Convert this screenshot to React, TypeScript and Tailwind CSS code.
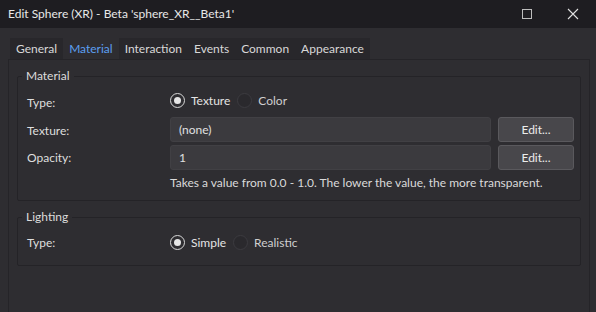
import React from "react";

function Radio({ checked, label }: { checked?: boolean; label: string }) {
  return (
    <label className="flex items-center gap-[6px]">
      <span
        className={
          "w-[15px] h-[15px] rounded-full border flex items-center justify-center " +
          (checked ? "border-[#d8d8d8]" : "border-[#3c3b40] bg-[#2a292d]")
        }
      >
        {checked && <span className="w-[7px] h-[7px] rounded-full bg-[#e6e6e6]" />}
      </span>
      <span className={checked ? "text-[#e4e4e4]" : "text-[#cfcfcf]"}>{label}</span>
    </label>
  );
}

function Group({ title, pt, pb, children }: { title: string; pt: string; pb: string; children: React.ReactNode }) {
  return (
    <div className={"relative border border-[#242327] rounded-[2px] pl-[9px] pr-[8px] " + pt + " " + pb}>
      <span className="absolute -top-[9px] left-[4px] px-[4px] bg-[#2e2d31] text-[#dcdcdc] leading-[16px]">{title}</span>
      {children}
    </div>
  );
}

const tabs = ["General", "Material", "Interaction", "Events", "Common", "Appearance"];

export default function App() {
  return (
    <div
      className="w-[596px] h-[312px] bg-[#2e2d31] text-[12px] text-[#dedede] flex flex-col overflow-hidden"
      style={{ fontFamily: '"Segoe UI", Lato, "Open Sans", sans-serif' }}
    >
      {/* title bar */}
      <div className="h-[28px] bg-[#1e1d21] flex items-center justify-between pl-[8px] shrink-0">
        <span className="text-[#e8e8e8] text-[12px]">Edit Sphere (XR) - Beta 'sphere_XR__Beta1'</span>
        <div className="flex items-center h-full">
          <div className="w-[46px] h-full flex items-center justify-center">
            <span className="w-[10px] h-[10px] border border-[#bdbdbd]" />
          </div>
          <div className="w-[46px] h-full flex items-center justify-center">
            <svg width="12" height="12" viewBox="0 0 12 12" stroke="#e0e0e0" strokeWidth="1.1">
              <path d="M1 1 L11 11 M11 1 L1 11" />
            </svg>
          </div>
        </div>
      </div>

      {/* tabs */}
      <div className="flex pl-[10px] pt-[10px] shrink-0">
        {tabs.map((t) => (
          <div
            key={t}
            className={
              "h-[21px] px-[6px] flex items-center " +
              (t === "Material" ? "bg-[#2e2d31] text-[#5c9ff0]" : "bg-[#28272b] text-[#d8d8d8]")
            }
          >
            {t}
          </div>
        ))}
      </div>

      {/* tab page */}
      <div className="flex-1 ml-[8px] mr-[6px] border-l border-t border-r border-[#252428] pt-[16px] px-[8px]">
        <Group title="Material" pt="pt-[12px]" pb="pb-[8px]">
          <div className="grid grid-cols-[143px_1fr] items-center">
            <span>Type:</span>
            <div className="flex items-center gap-[7px] h-[23px] mb-[5px]">
              <Radio checked label="Texture" />
              <Radio label="Color" />
            </div>

            <span>Texture:</span>
            <div className="flex gap-[7px] mb-[3px]">
              <div className="w-[321px] h-[25px] rounded-[3px] bg-[#3b3a3e] border border-[#414044] flex items-center px-[8px] text-[#e0e0e0]">
                (none)
              </div>
              <button className="w-[76px] h-[25px] rounded-[3px] bg-[#48474b] border border-[#5a595d] text-[#ececec]">
                Edit...
              </button>
            </div>

            <span>Opacity:</span>
            <div className="flex gap-[7px]">
              <div className="w-[321px] h-[25px] rounded-[3px] bg-[#3b3a3e] border border-[#414044] flex items-center px-[8px] text-[#e0e0e0]">
                1
              </div>
              <button className="w-[76px] h-[25px] rounded-[3px] bg-[#48474b] border border-[#5a595d] text-[#ececec]">
                Edit...
              </button>
            </div>

            <span />
            <span className="text-[#dadada] h-[18px] mt-[4px] flex items-center">
              Takes a value from 0.0 - 1.0. The lower the value, the more transparent.
            </span>
          </div>
        </Group>

        <div className="h-[16px]" />

        <Group title="Lighting" pt="pt-[13px]" pb="pb-[11px]">
          <div className="grid grid-cols-[143px_1fr] items-center">
            <span>Type:</span>
            <div className="flex items-center gap-[7px] h-[23px]">
              <Radio checked label="Simple" />
              <Radio label="Realistic" />
            </div>
          </div>
        </Group>
      </div>
    </div>
  );
}
